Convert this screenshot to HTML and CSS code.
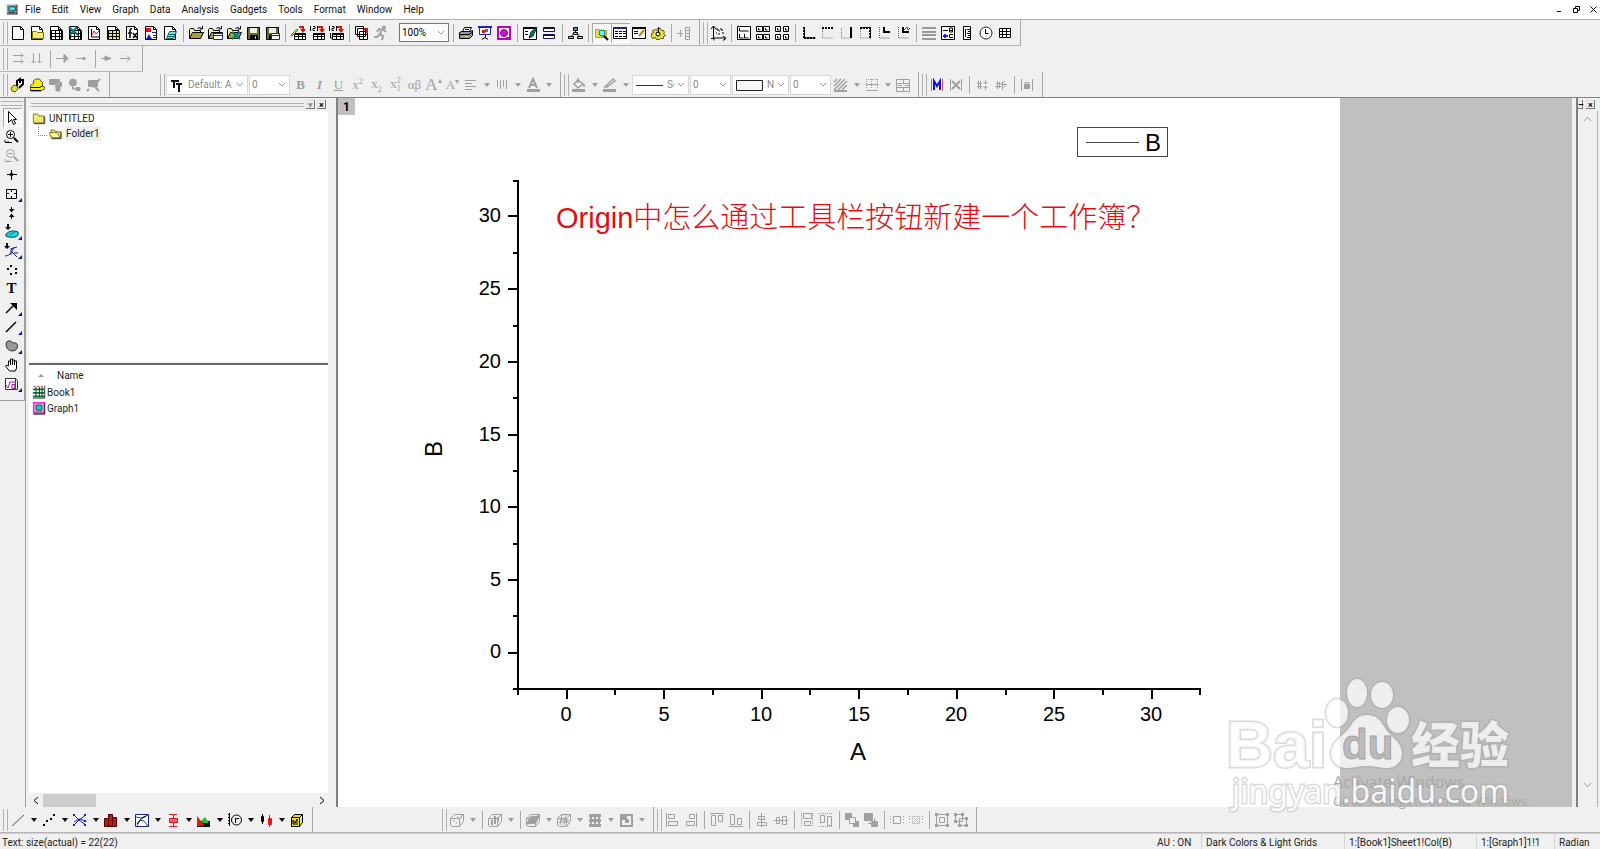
FILE: index.html
```html
<!DOCTYPE html>
<html lang="en">
<head>
  <meta charset="UTF-8">
  <title>UNTITLED - /Folder1/ - [Graph1]</title>
  <link rel="stylesheet" href="styles.css">
</head>
<body>
  <!-- shared icon parts -->
  <svg class="defs" aria-hidden="true">
    <symbol id="page" viewBox="0 0 16 16"><path fill="#fff" d="M2.5 1.5h8l3 3v10h-11z"/><path d="M10.5 1.5v3h3"/></symbol>
    <symbol id="grid" viewBox="0 0 16 16"><path d="M3.5 5.5h11v9h-11zM3.5 8.5h11M3.5 11.5h11M7.5 5.5v9M11.5 5.5v9"/></symbol>
    <symbol id="folder" viewBox="0 0 16 16"><path fill="#f4f08a" d="M1.5 13.5v-9l1-1h3l1 2h6v2"/><path fill="#a8a040" d="M1.5 13.5l3-6h11l-3 6z"/><path d="M9.5 3.5q2-2 4 0M14.5 1v3h-3"/></symbol>
    <symbol id="floppy" viewBox="0 0 16 16"><path fill="#6b6b20" d="M2.5 2.5h12v12h-12z"/><path fill="#eee" stroke="none" d="M5 3h7v5H5z"/><path fill="#000" d="M5.5 10.5h7v4h-7z"/><path stroke="#fff" d="M10.5 11.5v2"/></symbol>
    <symbol id="import" viewBox="0 0 16 16"><path fill="#fff" d="M4.5 8.5h11v6h-11zM4.5 11.5h11M8.5 8.5v6M12.5 8.5v6"/><path stroke-width="2" d="M4 9h12"/><path stroke="#e01010" stroke-width="2" d="M9 2h4v4"/><path fill="#e01010" stroke="none" d="M10 4h6l-3 4z"/></symbol>
    <symbol id="cube" viewBox="0 0 16 16"><path d="M1.5 13.5v-7l4-4h9v7l-4 5h-7zM1.5 6.5h9l4-4M10.5 6.5v8"/></symbol>
  </svg>

  <nav class="menubar">
    <svg class="app-icon" viewBox="0 0 16 16"><path fill="#9a9a9a" stroke="none" d="M1 2h13v12H1z"/><path fill="#20c8d0" stroke="#055" d="M3.5 4.5h8v5h-8z"/><path d="M1 13.5h13M13.5 2v12M3 11.5h8"/><path stroke="#fff" d="M5 8.5l3-2 2 1"/></svg>
    <a href="#">File</a><a href="#">Edit</a><a href="#">View</a><a href="#">Graph</a><a href="#">Data</a><a href="#">Analysis</a><a href="#">Gadgets</a><a href="#">Tools</a><a href="#">Format</a><a href="#">Window</a><a href="#">Help</a>
    <span class="win-buttons">
      <button title="Minimize"><svg viewBox="0 0 9 9"><path d="M2 6.5h4"/></svg></button>
      <button title="Restore"><svg viewBox="0 0 9 9"><path d="M1.5 3.5h4v4h-4zM3.5 3v-1.5h4v4H6"/></svg></button>
      <button title="Close"><svg viewBox="0 0 9 9"><path d="M1.5 1.5l6 6M7.5 1.5l-6 6"/></svg></button>
    </span>
  </nav>

  <div class="row">
    <div class="bar">
      <span class="grip"></span>
      <button title="New Project"><svg viewBox="0 0 16 16"><use href="#page"/></svg></button>
      <button title="New Folder"><svg viewBox="0 0 16 16"><use href="#page"/><path fill="#f0ec70" stroke="#77700a" d="M3.5 13.5v-7h4l1 1h6v6z"/></svg></button>
      <button title="New Workbook"><svg viewBox="0 0 16 16"><use href="#page"/><use href="#grid"/></svg></button>
      <button title="New Excel"><svg viewBox="0 0 16 16"><use href="#page"/><use href="#grid"/><path stroke="#087878" stroke-width="2" d="M2 2l9 8M10 2l-7 8"/></svg></button>
      <button title="New Graph"><svg viewBox="0 0 16 16"><use href="#page"/><path d="M5.5 4v8h8"/><path stroke="#e01010" d="M6 10l2-4 2 3 3-3"/></svg></button>
      <button title="New Matrix"><svg viewBox="0 0 16 16"><use href="#page"/><path fill="#f0e840" stroke="none" d="M3 6h12v9H3z"/><use href="#grid"/></svg></button>
      <button title="New Function"><svg viewBox="0 0 16 16"><use href="#page"/><path stroke-width="1.5" d="M8 4q-2-1-2 2v7M4 8h4M9 8l4 5M13 8l-4 5"/></svg></button>
      <button title="New Layout"><svg viewBox="0 0 16 16"><use href="#page"/><path fill="#e01010" stroke="none" d="M3 3h5v4H3z"/><path fill="#2020d0" stroke="none" d="M6 9l3 5H3z"/><path stroke="#2020d0" d="M9 7.5h4M10 10.5h3M10 12.5h3"/></svg></button>
      <button title="New Notes"><svg viewBox="0 0 16 16"><use href="#page"/><path fill="#7fdde2" stroke="#066" d="M7.5 6.5h7l-3 7h-7zM7 9.5h6M6 11.5h6"/></svg></button>
      <span class="sep"></span>
      <button title="Open"><svg viewBox="0 0 16 16"><use href="#folder"/></svg></button>
      <button title="Open Template"><svg viewBox="0 0 16 16"><use href="#folder"/><path fill="#fff" stroke="#2020a0" d="M6.5 8.5h9v6h-9zM7 10.5h8"/></svg></button>
      <button title="Open Excel"><svg viewBox="0 0 16 16"><use href="#folder"/><path stroke="#087878" stroke-width="2" d="M6 7l8 7M14 7l-8 7"/></svg></button>
      <button title="Save Project"><svg viewBox="0 0 16 16"><use href="#floppy"/></svg></button>
      <button title="Save Template"><svg viewBox="0 0 16 16"><use href="#floppy"/><path fill="#fff" stroke="#2020a0" d="M7.5 8.5h8v6h-8zM8 10.5h7"/></svg></button>
      <span class="sep"></span>
      <button title="Import Wizard"><svg viewBox="0 0 16 16"><use href="#import"/><path fill="#f0e040" stroke="#77700a" d="M1 10l6-6 1 1-6 6z"/></svg></button>
      <button title="Import Single ASCII"><svg viewBox="0 0 16 16"><use href="#import"/><path d="M1.5 1v5M4 1.5h2v2H4v2h2M8.5 1v5"/></svg></button>
      <button title="Import Multiple ASCII"><svg viewBox="0 0 16 16"><use href="#import"/><path d="M1.5 1v5M4 1.5h2v2H4v2h2M8.5 1v5M2.5 8v5h2"/></svg></button>
      <span class="sep"></span>
      <button title="Batch Processing"><svg viewBox="0 0 16 16"><path fill="#fff" d="M1.5 1.5h8v8h-8zM3.5 3.5h8v8h-8zM5.5 6.5h8v8h-8zM5.5 9.5h8M9.5 7v7"/><path stroke="#e01010" stroke-width="2" d="M10 4h3v4"/></svg></button>
      <button title="Recalculate" disabled><svg viewBox="0 0 16 16"><path stroke-width="2" d="M9 4L7 9l3 2-1 4M7 9l-3 3H1M4 7l2-3 5 1 2 2"/><circle cx="11" cy="2.5" r="1.5" fill="currentColor"/></svg></button>
      <select class="zoom" aria-label="Zoom"><option>100%</option></select>
      <span class="sep"></span>
      <button title="Print"><svg viewBox="0 0 16 16"><path fill="#fff" d="M4.5 6.5l2-4h7l-2 4"/><path fill="#999" d="M1.5 7.5l2-1h9l2-1v5l-3 3h-10z"/><path d="M2 9.5h9l3-2M7 4.5h4"/><path stroke="#e8e030" d="M7 11.5h3"/></svg></button>
      <button title="Slide Show"><svg viewBox="0 0 16 16"><path fill="#fff" stroke="#2020c0" d="M2.5 2.5h11v7h-11z"/><path stroke="#2020c0" stroke-width="2" d="M1 2h14"/><path d="M8.5 10v3M5 14.5l3-2 3 2"/><path fill="#e01010" stroke="none" d="M5 5h3v3H5z"/><path fill="#10a040" stroke="none" d="M8 4h3v3H8z"/></svg></button>
      <button title="Video"><svg viewBox="0 0 16 16"><path fill="#fff" stroke="#c000c0" stroke-width="2" d="M2 2h12v12H2z"/><circle cx="8" cy="8" r="3.5" fill="#d010d0" stroke="#800080"/><path stroke="#c000c0" d="M10 12.5h3"/></svg></button>
      <span class="sep"></span>
      <button title="Edit Mode"><svg viewBox="0 0 16 16"><path fill="#fff" d="M1.5 2.5h13v12h-13z"/><path stroke-width="2" d="M1 3h14"/><path fill="#087878" stroke="#033" d="M15 2l-6 5-2 6 4-2z"/><path d="M3 6.5h3M3 9.5h3"/></svg></button>
      <button title="Duplicate"><svg viewBox="0 0 16 16"><path fill="#fff" stroke="#101050" d="M2.5 2.5h11v4h-11zM2.5 9.5h11v4h-11z"/><path stroke="#101050" d="M2 3.5h12M2 10.5h12"/></svg></button>
      <span class="sep"></span>
      <button title="Project Tree"><svg viewBox="0 0 16 16"><path d="M8.5 5v3M4.5 11l4-4 4 4"/><path fill="#20a8b0" d="M6.5 2.5h4v3h-4z"/><path fill="#e8e040" d="M6.5 7.5h4v2h-4zM1.5 11.5h5v2h-5zM10.5 11.5h5v2h-5z"/></svg></button>
      <span class="sep"></span>
      <button class="on" title="Project Explorer"><svg viewBox="0 0 16 16"><path fill="#e8e040" stroke="#b0a61e" d="M2.5 12.5v-8h4l1 1h6v7z"/><circle cx="9" cy="8" r="3" fill="#7fe8f0" stroke="#077"/><path stroke-width="2" d="M11 11l4 4"/></svg></button>
      <button class="on" title="Results Log"><svg viewBox="0 0 16 16"><path fill="#fff" d="M1.5 2.5h13v11h-13z"/><path stroke="#202080" stroke-width="2" d="M1 3h14"/><path stroke-dasharray="3 1" d="M3 6.5h11M3 8.5h11M3 11.5h11"/></svg></button>
      <button title="Script Window"><svg viewBox="0 0 16 16"><path fill="#fff" d="M1.5 2.5h13v11h-13z"/><path stroke-width="2" d="M1 3h14"/><path d="M3 6.5h4M3 8.5h4"/><path stroke="#99901a" stroke-width="2" d="M13 5l-5 6"/></svg></button>
      <button title="Code Builder"><svg viewBox="0 0 16 16"><path fill="#e8e040" stroke="#5a5510" d="M1.5 8.5l2-1-1-2 3-1 1 1 1-2h3l1 2 2 0 1 2-1 1 2 2-2 1 0 2-3 0-1 1h-3l-1-2-3 1-1-2z"/><circle cx="8" cy="9" r="2" fill="#fff"/><path d="M8.5 2v6"/></svg></button>
      <span class="sep"></span>
      <button title="Add Column" disabled><svg viewBox="0 0 16 16"><path d="M1 8.5h6M4.5 5v7M9.5 2.5h4v12h-4zM10 5.5h4M10 8.5h4M10 11.5h4"/></svg></button>
    </div>
    <div class="bar">
      <span class="grip"></span>
      <button title="Rescale"><svg viewBox="0 0 16 16"><path d="M3.5 1v12h12M1 4l2.5-3 2.5 3M13 11l3 2.5-3 2M1 13.5h3v2M6 4h2v2M8 9h2M10 4h2v2M6 8h1M12 8h2M9 6h1"/></svg></button>
      <span class="sep"></span>
      <button title="Extract Layers"><svg viewBox="0 0 16 16"><path fill="#fff" d="M1.5 1.5h13v13h-13z"/><path d="M3.5 3v3h9M3.5 9v4h4M8.5 9v4h4"/></svg></button>
      <button title="Merge"><svg viewBox="0 0 16 16"><path fill="#fff" d="M1.5 1.5h6v5h-6zM8.5 1.5h6v5h-6zM1.5 9.5h6v5h-6zM8.5 9.5h6v5h-6z"/><path d="M3.5 3v2h2M10.5 3v2h2M3.5 11v2h2M10.5 11v2h2"/></svg></button>
      <button title="Arrange Layers"><svg viewBox="0 0 16 16"><path fill="#fff" d="M1.5 1.5h5v5h-5zM9.5 1.5h5v5h-5zM1.5 9.5h5v5h-5zM9.5 9.5h5v5h-5z"/><path d="M3.5 3v2h2M11.5 3v2h2M3.5 11v2h2M11.5 11v2h2"/></svg></button>
      <span class="sep"></span>
      <button title="Bottom X Left Y"><svg viewBox="0 0 16 16"><path d="M4.5 2v11h11"/><path stroke-width="2" stroke-dasharray="2 1" d="M4 2v11M4 13h11"/></svg></button>
      <button title="Top X"><svg viewBox="0 0 16 16"><path stroke-width="2" stroke-dasharray="2 1" d="M3 3h11"/><path stroke-dasharray="1 1" stroke="#777" d="M3.5 4v9h11"/></svg></button>
      <button title="Right Y"><svg viewBox="0 0 16 16"><path stroke-dasharray="1 1" stroke="#777" d="M3.5 3v10h9"/><path stroke-width="2" d="M13 2v11"/></svg></button>
      <button title="Top X Right Y"><svg viewBox="0 0 16 16"><path d="M3 2.5h10.5v11"/><path stroke-width="2" stroke-dasharray="2 1" d="M3 3h10v10"/><path stroke-dasharray="1 1" stroke="#777" d="M3.5 4v9h10"/></svg></button>
      <button title="Inset Graph"><svg viewBox="0 0 16 16"><path stroke-dasharray="1 1" stroke="#555" d="M3.5 2v11h11"/><path stroke-width="2" d="M8 2v5h6"/></svg></button>
      <button title="Inset Graph With Data"><svg viewBox="0 0 16 16"><path stroke-dasharray="1 1" stroke="#555" d="M3.5 2v11h11"/><path stroke-width="2" d="M8 2v5h6"/><path stroke="#c01010" d="M9 5l3-3 1 3 2-2"/></svg></button>
      <span class="sep"></span>
      <button title="Color Scale"><svg viewBox="0 0 16 16"><path stroke="#999" stroke-width="2" d="M1 3h14M1 7h14M1 10h14M1 14h14"/></svg></button>
      <button title="New Legend"><svg viewBox="0 0 16 16"><path fill="#fff" d="M1.5 1.5h13v13h-13z"/><path d="M3 5.5h5M9.5 3v4h3V3zM10 5.5h2M13 9.5H9.5v3H13"/><path stroke="#2020e0" stroke-width="2" d="M3 11h5M5 9v4"/></svg></button>
      <button title="Scale"><svg viewBox="0 0 16 16"><path fill="#fff" d="M4.5 1.5h7v13h-7z"/><path d="M8 4.5h3M9 6.5h2M8 8.5h3M9 10.5h2M8 12.5h3M6.5 4v8"/></svg></button>
      <button title="Date and Time"><svg viewBox="0 0 16 16"><circle cx="8" cy="8" r="6" fill="#fff" stroke="#222"/><path d="M7.5 4v4.5h3"/></svg></button>
      <button title="New Table"><svg viewBox="0 0 16 16"><path fill="#fff" d="M2.5 3.5h11v9h-11zM2.5 6.5h11M2.5 9.5h11M5.5 4v9M9.5 4v9"/></svg></button>
    </div>
  </div>

  <div class="row">
    <div class="bar">
      <span class="grip"></span>
      <button title="Row Order" disabled><svg viewBox="0 0 16 16"><path d="M3 4.5h10M11 2.5l2 2-2 2M3 10.5h10M11 8.5l2 2-2 2"/></svg></button>
      <button title="Column Order" disabled><svg viewBox="0 0 16 16"><path d="M4.5 2v10M2.5 10l2 2 2-2M10.5 2v10M8.5 10l2 2 2-2"/></svg></button>
      <span class="sep"></span>
      <button title="Last Step" disabled><svg viewBox="0 0 16 16"><path d="M1 7.5h9"/><path fill="currentColor" d="M9 3l4 4.5-4 4z"/></svg></button>
      <button title="Step" disabled><svg viewBox="0 0 16 16"><path d="M2 7.5h9"/><path fill="currentColor" d="M9 6l3 1.5-3 1.5z"/></svg></button>
      <span class="sep"></span>
      <button title="Run" disabled><svg viewBox="0 0 16 16"><path d="M1 7.5h10"/><path fill="currentColor" d="M5 5l6 2.5-6 2z"/></svg></button>
      <button title="Next" disabled><svg viewBox="0 0 16 16"><path d="M1 7.5h10M8 4.5l3 3-3 3"/></svg></button>
    </div>
  </div>

  <div class="row last">
    <div class="bar">
      <span class="grip"></span>
      <button title="Pick Format"><svg viewBox="0 0 16 16"><path fill="#e8e030" stroke="#5a5510" d="M4 8l3 1 1 3-3 3-3-1-1-3z"/><path stroke-width="2" d="M7 9V4l3-2v4M11 3l2 0v4l-4 4"/></svg></button>
      <button title="Style Holder"><svg viewBox="0 0 16 16"><path fill="#f4ee20" stroke="#5a5510" d="M1.5 8.5l3-2V4l2-2h4l3 4v3l2 1v2l-4 2h-10z"/><path d="M2 10.5h9l3-2M2 13.5h10"/></svg></button>
      <button title="Apply Format" disabled><svg viewBox="0 0 16 16"><path fill="currentColor" d="M1.5 2.5h10v5h-10zM6.5 9.5h7v-4h-2M8 10h4v4H8z"/></svg></button>
      <button title="Copy Format" disabled><svg viewBox="0 0 16 16"><circle cx="6" cy="5.5" r="3.5" fill="currentColor"/><path fill="currentColor" d="M5.5 9v3h3M9 10.5h4v3H9z"/></svg></button>
      <button title="Clear Format" disabled><svg viewBox="0 0 16 16"><path fill="currentColor" d="M2.5 3.5h9v6h-9z"/><path stroke-width="2" d="M14 2L6 10M7 8l6 6M3 12l-2 2"/></svg></button>
    </div>
    <div class="bar format">
      <span class="grip"></span>
      <label class="combo font-name"><svg viewBox="0 0 16 16"><path stroke="#111" stroke-width="2" d="M3 4h8M6 4v7M8 7h6M11 7v8"/></svg><select aria-label="Font"><option>Default: A</option></select></label>
      <label class="combo size"><select aria-label="Font size"><option>0</option></select></label>
      <button class="txt b" title="Bold" disabled>B</button>
      <button class="txt it" title="Italic" disabled>I</button>
      <button class="txt u" title="Underline" disabled>U</button>
      <button class="txt" title="Superscript" disabled>x<sup>2</sup></button>
      <button class="txt" title="Subscript" disabled>x<sub>2</sub></button>
      <button class="txt" title="Supersubscript" disabled>x<span class="both"><sup>2</sup><sub>1</sub></span></button>
      <button class="txt" title="Greek" disabled>αβ</button>
      <button class="txt big" title="Increase Font" disabled>A<sup>▴</sup></button>
      <button class="txt" title="Decrease Font" disabled>A<sup>▾</sup></button>
      <button title="Alignment" disabled><svg viewBox="0 0 16 16"><path d="M2 3.5h11M2 6.5h7M2 9.5h11M2 12.5h7"/></svg></button><button class="arr" title="Alignment options" disabled></button>
      <button title="Vertical" disabled><svg viewBox="0 0 16 16"><path d="M3.5 3v7M6.5 3v9M9.5 3v7M12.5 3v9"/></svg></button><button class="arr" title="Vertical options" disabled></button>
      <button title="Font Color" disabled><svg viewBox="0 0 16 16"><path stroke-width="2" d="M4 11l4-9 4 9M6 8h4"/><path stroke-width="3" d="M2 13.5h13"/></svg></button><button class="arr" title="Font colors" disabled></button>
    </div>
    <div class="bar">
      <span class="grip"></span>
      <button title="Fill Color" disabled><svg viewBox="0 0 16 16"><path stroke-width="1.5" d="M3 7l4-4 5 4-5 4zM7 1v5M13 7v3"/><path stroke-width="3" d="M1 13.5h13"/></svg></button><button class="arr" title="Fill colors" disabled></button>
      <button title="Line Color" disabled><svg viewBox="0 0 16 16"><path stroke-width="1.5" d="M3 10l8-8 2 2-8 6H3z"/><path stroke-width="3" d="M1 13.5h13"/></svg></button><button class="arr" title="Line colors" disabled></button>
      <label class="combo style"><svg viewBox="0 0 28 16"><path stroke="#333" d="M1 8.5h27"/></svg><select aria-label="Line style"><option>Solid</option></select></label>
      <label class="combo size"><select aria-label="Line width"><option>0</option></select></label>
      <label class="combo style"><svg viewBox="0 0 28 16"><path stroke="#222" fill="#f6f6f6" d="M1.5 3.5h26v10h-26z"/></svg><select aria-label="Fill pattern"><option>None</option></select></label>
      <label class="combo size"><select aria-label="Pattern width"><option>0</option></select></label>
      <button title="Pattern" disabled><svg viewBox="0 0 16 16"><path stroke-width="1.5" d="M1 5l3-3M1 9l7-7M1 13l11-11M5 13l9-9M9 13l5-5"/><path stroke-width="2" d="M1 14h13"/></svg></button><button class="arr" title="Patterns" disabled></button>
      <button title="Borders" disabled><svg viewBox="0 0 16 16"><path stroke-dasharray="1 1" d="M2.5 2v10M7.5 2v10M13.5 2v10M2 2.5h12"/><path d="M2 7.5h12M2 13.5h12"/></svg></button><button class="arr" title="Border options" disabled></button>
      <button title="Merge Cells" disabled><svg viewBox="0 0 16 16"><path d="M1.5 2.5h13v12h-13zM1.5 6.5h13M1.5 10.5h13M8.5 2v5M8.5 10v5M3 8.5h4M10 8.5h4"/></svg></button>
    </div>
    <div class="bar">
      <span class="grip"></span>
      <button title="Mask Points"><svg viewBox="0 0 16 16"><path stroke="#e05050" d="M2.5 2v12M13.5 2v12"/><path stroke="#1010e0" stroke-width="2" d="M5 13V4l3 5 3-5v9"/></svg></button>
      <button title="Unmask" disabled><svg viewBox="0 0 16 16"><path d="M2.5 2v12M13.5 2v12"/><path stroke-width="2" d="M4 4l8 8M12 4l-8 8"/></svg></button>
      <span class="sep"></span>
      <button title="Swap Mask" disabled><svg viewBox="0 0 16 16"><path d="M3 6.5h5M3 9.5h5M4.5 4v8M6.5 4v8M11.5 3v4M9.5 5l2 2 2-2M11.5 13V9M9.5 11l2-2 2 2"/></svg></button>
      <button title="Hide Mask" disabled><svg viewBox="0 0 16 16"><path d="M3 6.5h5M2 9.5h6M4.5 4v8M6.5 5v6M8 7.5h6M9.5 5v8M12 4l-3 3M11 10.5l2-2"/></svg></button>
      <span class="sep"></span>
      <button title="Lock Mask" disabled><svg viewBox="0 0 16 16"><path d="M2.5 2v12M13.5 2v12M6 8V5.5h4V8"/><path fill="currentColor" d="M5.5 7.5h5v4h-5z"/></svg></button>
    </div>
  </div>

  <main class="main">
    <aside class="palette">
      <span class="grip flat"></span>
      <button class="on" title="Pointer"><svg viewBox="0 0 16 16"><path fill="#fff" d="M4.5 1.5v11l3-3 2 5 2-1-2-4h3z"/></svg></button>
      <button title="Zoom In"><svg viewBox="0 0 16 16"><circle cx="6.5" cy="5.5" r="4" fill="#fff"/><path d="M4 5.5h5M6.5 3v5M1 13.5h7M1 11v2M4 12v2"/><path stroke-width="2" d="M10 9l4 4"/></svg></button>
      <button title="Zoom Out" disabled><svg viewBox="0 0 16 16"><circle cx="6.5" cy="5.5" r="4"/><path d="M4 5.5h5M1 13.5h7M1 11v2M4 12v2"/><path stroke-width="2" d="M10 9l4 4"/></svg></button>
      <button title="Screen Reader"><svg viewBox="0 0 16 16"><path d="M3 7.5h10M7.5 3v10"/><circle cx="7.5" cy="7.5" r="1.5"/></svg></button>
      <button class="more" title="Data Selector"><svg viewBox="0 0 16 16"><path d="M2.5 3.5h10v9h-10zM7.5 3v3M7.5 10v3M2 7.5h3M10 7.5h3"/></svg></button>
      <button title="Data Reader"><svg viewBox="0 0 16 16"><path d="M7.5 2v4M7.5 10v4"/><path fill="currentColor" stroke="none" d="M5 4h5.5L7.5 7.5zM5 12h5.5L7.5 8.5z"/></svg></button>
      <button class="more" title="Mask"><svg viewBox="0 0 16 16"><path fill="currentColor" stroke="none" d="M1 3h6L4 6zM3 0h2v4H3z"/><path fill="#20d8e8" stroke="#044" d="M2 10q5-5 12-2 1 4-3 5-6 1-9-1z"/><path stroke="#08a" d="M5 11l6-3"/></svg></button>
      <button class="more" title="Draw Data"><svg viewBox="0 0 16 16"><path fill="currentColor" stroke="none" d="M0 3h6L3 6zM2 0h2v4H2z"/><path stroke="#202080" d="M1 13q6 0 9-9M7 5v7M7 6l6-2M8 9l5 5M10 10h4"/></svg></button>
      <button title="Draw Points"><svg viewBox="0 0 16 16"><path stroke-width="2" d="M6 4h2M3 7h2M11 7h2M11 11h2M6 12h2"/></svg></button>
      <button class="txt t" title="Text Tool">T</button>
      <button class="more" title="Arrow"><svg viewBox="0 0 16 16"><path stroke-width="1.5" d="M2 13l9-9"/><path fill="currentColor" stroke="none" d="M6 3h7v7z"/></svg></button>
      <button class="more" title="Line"><svg viewBox="0 0 16 16"><path stroke-width="1.5" d="M2 13L12 3"/></svg></button>
      <button class="more" title="Region"><svg viewBox="0 0 16 16"><path fill="#999" stroke="#333" d="M2.5 4q4-3 6 1 5-1 5 3 0 5-6 5-7-2-5-9z"/></svg></button>
      <button title="Pan"><svg viewBox="0 0 16 16"><path fill="#fff" d="M5.5 14l-4-5 1-1 2 1V4h2V2h2v1h2v1h2v7l-1 3z"/><path d="M6.5 3v5M8.5 3v5M10.5 4v4"/></svg></button>
      <button class="more" title="Insert Equation"><svg viewBox="0 0 16 16"><path fill="#fff" stroke="#333" d="M1.5 2.5h10v11h-10zM11.5 2.5l2 2v9h-2"/><path stroke="#a020a0" d="M2 9l2 3 2-6h6M8 8.5h3v4H8zM11 9v4"/></svg></button>
    </aside>

    <aside class="explorer">
      <div class="pane-title"><span class="rails"></span><button class="faint" title="Menu">▾</button><button title="Close">×</button></div>
      <ul class="tree">
        <li><svg viewBox="0 0 16 16"><path fill="#ecea70" stroke="#77700a" d="M1.5 13.5v-10h5l1 2h6v8z"/><path d="M2 14.5h12.5V6"/></svg><span>UNTITLED</span>
          <ul>
            <li><svg viewBox="0 0 16 16"><path fill="#ecea70" stroke="#77700a" d="M3.5 13.5v-9h4l1 2h6v7z"/><path fill="#f8f6a0" stroke="#77700a" d="M1.5 7.5h9l3 6h-9z"/><path d="M4 14.5h11V7"/></svg><span class="sel">Folder1</span></li>
          </ul>
        </li>
      </ul>
      <table class="files">
        <thead><tr><th><span class="sort"></span>Name</th></tr></thead>
        <tbody>
          <tr><td><svg viewBox="0 0 16 16"><path fill="#e8fff0" stroke="none" d="M1 1h13v13H1z"/><path stroke="#0a7a3a" stroke-width="2" d="M1 5h13M1 9h13M1 13h13"/><path d="M4.5 2v12M8.5 2v12M11.5 2v12"/><path stroke="#e01010" d="M2 1.5h2M6 1.5h2M10 1.5h2"/><path d="M14.5 1v14H1"/></svg>Book1</td></tr>
          <tr><td><svg viewBox="0 0 16 16"><path fill="#fff" stroke="#e030e0" stroke-width="2" d="M2 2h12v12H2z"/><path fill="#20c8d0" d="M4.5 4.5h7v6h-7z"/><path d="M3 12.5h10M14.5 2v13H2"/></svg>Graph1</td></tr>
        </tbody>
      </table>
      <div class="hscroll"><button title="Scroll left"><svg viewBox="0 0 9 9"><path d="M6 1L2 4.5 6 8"/></svg></button><span class="thumb"></span><button title="Scroll right"><svg viewBox="0 0 9 9"><path d="M3 1l4 3.5L3 8"/></svg></button></div>
    </aside>

    <section class="workspace">
      <div class="graph-page">
        <button class="layer">1</button>
        <svg class="chart" viewBox="0 0 1002 709" preserveAspectRatio="xMinYMin meet">
          <rect class="legend-box" x="739.5" y="29.5" width="90" height="29"/>
          <path class="legend-line" d="M748 44.5h53"/>
          <text class="axis-title" x="807" y="53">B</text>
          <path class="axis" d="M180 82v510M175 591h688"/>
          <path class="ticks" d="M170 118h9M170 191h9M170 264h9M170 337h9M170 409h9M170 482h9M170 555h9
            M175 83h5M175 155h5M175 228h5M175 300h5M175 373h5M175 446h5M175 518h5
            M229 591v10M326 591v10M424 591v10M521 591v10M619 591v10M716 591v10M814 591v10
            M180 591v6M277 591v6M375 591v6M472 591v6M570 591v6M668 591v6M765 591v6M862 591v6"/>
          <g class="ylabels">
            <text x="163" y="124">30</text><text x="163" y="197">25</text><text x="163" y="270">20</text><text x="163" y="343">15</text><text x="163" y="415">10</text><text x="163" y="488">5</text><text x="163" y="560">0</text>
          </g>
          <g class="xlabels">
            <text x="228" y="623">0</text><text x="326" y="623">5</text><text x="423" y="623">10</text><text x="521" y="623">15</text><text x="618" y="623">20</text><text x="716" y="623">25</text><text x="813" y="623">30</text>
          </g>
          <text class="axis-title" x="512" y="662">A</text>
          <text class="axis-title" transform="translate(104 359) rotate(-90)">B</text>
          <text class="note" x="218" y="130">Origin<tspan class="cjk">中怎么通过工具栏按钮新建一个工作簿？</tspan></text>
        </svg>
      </div>
      <div class="backdrop"></div>
    </section>

    <aside class="dock">
      <div class="dock-title"><button title="Pin">–</button><button title="Close">×</button></div>
      <div class="vscroll"><button title="Scroll up" disabled><svg viewBox="0 0 9 9"><path d="M1 6l3.5-4L8 6"/></svg></button><button title="Scroll down" disabled><svg viewBox="0 0 9 9"><path d="M1 3l3.5 4L8 3"/></svg></button></div>
    </aside>
  </main>

  <div class="row bottom">
    <div class="bar">
      <span class="grip"></span>
      <button title="Line"><svg viewBox="0 0 16 16"><path stroke="#555" d="M2 14L14 3"/></svg></button><button class="arr" title="Line plots"></button>
      <button title="Scatter"><svg viewBox="0 0 16 16"><path stroke-width="2" d="M2 13h2M5 9h2M9 7h2M12 3h2"/></svg></button><button class="arr" title="Scatter plots"></button>
      <button title="Line + Symbol"><svg viewBox="0 0 16 16"><path stroke="#2020d0" d="M2 3l5 5 7-5M2 13l5-5 7 5M2 10l5-3 7 2"/><path stroke="#2020a0" stroke-width="2" d="M1 3h2M6 8h2M12 3h2M1 13h2M12 13h2M12 9h2"/></svg></button><button class="arr" title="Line and symbol plots"></button>
      <button title="Column"><svg viewBox="0 0 16 16"><path fill="#c01818" stroke="#500" d="M1.5 6.5h4v8h-4zM5.5 2.5h4v12h-4zM9.5 5.5h4v9h-4z"/></svg></button><button class="arr" title="Column plots"></button>
      <button title="Multi-Panel"><svg viewBox="0 0 16 16"><path fill="#fff" stroke="#202080" d="M1.5 2.5h13v12h-13z"/><path stroke="#2040d0" d="M2 5l5 1 7-3M3 14l3-6 4 1 4 5"/><path d="M3 12l4-5 5-3"/></svg></button><button class="arr" title="Multi-panel plots"></button>
      <button title="Box"><svg viewBox="0 0 16 16"><path stroke="#d02020" d="M4 2.5h8M8.5 2v12M4 14.5h8"/><path fill="#f06060" stroke="#d02020" d="M4.5 6.5h8v4h-8z"/></svg></button><button class="arr" title="Box plots"></button>
      <button title="Area"><svg viewBox="0 0 16 16"><path fill="#111" stroke="none" d="M1 15V9h13V7v8z"/><path fill="#e01818" stroke="none" d="M1 14V4l7 9v1z"/><path fill="#20c030" stroke="none" d="M5 9l4-4 4 6H7z"/></svg></button><button class="arr" title="Area plots"></button>
      <button title="Specialized"><svg viewBox="0 0 16 16"><circle cx="9.5" cy="8" r="5"/><path d="M2.5 1v13M1 2.5h2M1 5.5h2M1 8.5h2M1 11.5h2M8.5 11V6M8 7.5l2-1h2"/></svg></button><button class="arr" title="Specialized plots"></button>
      <button title="Stock"><svg viewBox="0 0 16 16"><path fill="#fff" d="M4.5 2v10M3.5 4.5h2v5h-2z"/><path fill="#e01818" stroke="#e01818" d="M11.5 3v12M10.5 6.5h3v6h-3z"/></svg></button><button class="arr" title="Stock plots"></button>
      <button title="Template Library"><svg viewBox="0 0 16 16"><path fill="#f0d830" d="M2.5 5.5h8v9h-8zM2.5 5.5l3-3h8l-3 3M13.5 2.5v8l-3 4"/><path d="M4 12v-4l2 3 2-4v4M4 12h5"/></svg></button>
    </div>
    <div class="bar second">
      <span class="grip"></span>
      <button title="3D Scatter" disabled><svg viewBox="0 0 16 16"><use href="#cube"/><path d="M4 9h2M8 5h2M7 11h1M12 6h1"/></svg></button><button class="arr" title="3D scatter plots" disabled></button><span class="sep"></span>
      <button title="3D Bars" disabled><svg viewBox="0 0 16 16"><use href="#cube"/><path stroke-width="2" d="M5 13V8M8 12V4M11 10V5"/></svg></button><button class="arr" title="3D bar plots" disabled></button><span class="sep"></span>
      <button title="3D Surface" disabled><svg viewBox="0 0 16 16"><use href="#cube"/><path fill="currentColor" d="M2 12l3-7 9-1-3 7z"/></svg></button><button class="arr" title="3D surface plots" disabled></button>
      <button title="3D Wire" disabled><svg viewBox="0 0 16 16"><use href="#cube"/><path d="M3 10h10M4 8h9M6 3l-2 10M10 3l-2 10"/></svg></button><button class="arr" title="3D wire plots" disabled></button>
      <button title="Heatmap" disabled><svg viewBox="0 0 16 16"><path stroke-width="3" d="M2 3.5h12M2 8.5h12M2 13.5h12"/><path stroke-width="2" d="M4 2v13M8 2v13M12 2v13"/></svg></button><button class="arr" title="Heatmap plots" disabled></button>
      <button title="Image" disabled><svg viewBox="0 0 16 16"><path stroke-width="2" d="M3 3h11v11H3z"/><path fill="currentColor" d="M3.5 3.5h5v4h-5zM7.5 7.5h3v3h-3z"/></svg></button><button class="arr" title="Image plots" disabled></button>
    </div>
    <div class="bar">
      <span class="grip"></span>
      <button title="Align Left" disabled><svg viewBox="0 0 16 16"><path d="M2.5 1v14M4.5 2.5h6v4h-6zM4.5 9.5h9v4h-9z"/></svg></button>
      <button title="Align Right" disabled><svg viewBox="0 0 16 16"><path d="M13.5 1v14M6.5 2.5h5v4h-5zM3.5 9.5h8v4h-8z"/></svg></button>
      <span class="sep"></span>
      <button title="Align Top" disabled><svg viewBox="0 0 16 16"><path d="M1 1.5h14M2.5 3.5h4v10h-4zM9.5 3.5h4v6h-4z"/></svg></button>
      <button title="Align Bottom" disabled><svg viewBox="0 0 16 16"><path d="M1 14.5h14M2.5 2.5h4v10h-4zM9.5 6.5h4v6h-4z"/></svg></button>
      <span class="sep"></span>
      <button title="Align Vertical" disabled><svg viewBox="0 0 16 16"><path d="M7.5 1v14M4.5 4.5h6v3h-6zM3.5 10.5h9v3h-9z"/></svg></button>
      <button title="Align Horizontal" disabled><svg viewBox="0 0 16 16"><path d="M1 8.5h14M3.5 5.5h3v6h-3zM9.5 4.5h4v8h-4z"/></svg></button>
      <span class="sep"></span>
      <button title="Uniform Width" disabled><svg viewBox="0 0 16 16"><path d="M4.5 1.5h8v5h-8zM5.5 9.5h6v4h-6z"/><path stroke-dasharray="1 1" d="M2.5 1v14M13.5 1v14"/></svg></button>
      <button title="Uniform Height" disabled><svg viewBox="0 0 16 16"><path d="M2.5 3.5h4v7h-4zM9.5 4.5h4v9h-4z"/><path stroke-dasharray="1 1" d="M1 1.5h14M1 14.5h14"/></svg></button>
      <span class="sep"></span>
      <button title="Front" disabled><svg viewBox="0 0 16 16"><path fill="currentColor" d="M1.5 1.5h6v6h-6zM9.5 9.5h5v5h-5z"/><path fill="#f0f0f0" d="M5.5 5.5h6v6h-6z"/></svg></button>
      <button title="Back" disabled><svg viewBox="0 0 16 16"><path fill="currentColor" d="M1.5 1.5h8v7h-8zM8.5 9.5h6v5h-6z"/><path d="M5 11.5h3M11.5 6v3"/></svg></button>
      <span class="sep"></span>
      <button title="Front Data" disabled><svg viewBox="0 0 16 16"><path d="M4.5 4.5h7v7h-7z"/><path stroke-dasharray="1 2" d="M1.5 4v8M14.5 4v8"/></svg></button>
      <button title="Back Data" disabled><svg viewBox="0 0 16 16"><path stroke-dasharray="1 1" d="M4.5 4.5h7v7h-7zM6 6l5 5M11 6l-5 5"/><path stroke-dasharray="1 2" d="M1.5 4v8M14.5 4v8"/></svg></button>
      <span class="sep"></span>
      <button title="Group" disabled><svg viewBox="0 0 16 16"><path d="M2.5 2.5h11v11h-11zM5.5 5.5h5v5h-5z"/><path fill="currentColor" stroke="none" d="M1 1h3v3H1zM12 1h3v3h-3zM1 12h3v3H1zM12 12h3v3h-3z"/></svg></button>
      <button title="Ungroup" disabled><svg viewBox="0 0 16 16"><path d="M2.5 2.5h7v7h-7zM6.5 6.5h7v7h-7z"/><path fill="currentColor" stroke="none" d="M1 1h3v3H1zM8 1h3v3H8zM1 8h3v3H1zM12 5h3v3h-3zM5 12h3v3H5zM12 12h3v3h-3z"/></svg></button>
    </div>
  </div>

  <footer class="status">
    <span class="hint">Text: size(actual) = 22(22)</span>
    <span class="au">AU : ON</span>
    <span class="theme">Dark Colors &amp; Light Grids</span>
    <span class="dataset">1:[Book1]Sheet1!Col(B)</span>
    <span class="window">1:[Graph1]1!1</span>
    <span class="angle">Radian</span>
  </footer>

  <svg class="watermark" viewBox="1220 670 316 153">
    <g class="activate">
      <text class="a1" x="1333" y="788">Activate Windows</text>
      <text class="a2" x="1333" y="806">Go to Settings to activate Windows.</text>
    </g>
    <g class="mark">
      <text class="bai" x="1226" y="767">Bai</text>
      <ellipse cx="1337" cy="713" rx="11" ry="14"/>
      <ellipse cx="1357" cy="693" rx="10" ry="14"/>
      <ellipse cx="1382" cy="695" rx="11" ry="13"/>
      <ellipse cx="1398" cy="720" rx="11" ry="13"/>
      <path d="M1367 715c10 0 14 6 18 13 5 8 17 14 17 25 0 9-6 15-15 15-7 0-12-2-20-2s-13 2-20 2c-10 0-16-6-16-15 0-11 12-17 18-25 5-7 8-13 18-13z"/>
      <text class="jy" x="1411" y="763">经验</text>
      <text class="url" x="1232" y="803">jingyan.baidu.com</text>
    </g>
    <text class="du" x="1342" y="759">du</text>
  </svg>
</body>
</html>
```
FILE: styles.css
```css
* {
  box-sizing: border-box;
}
body {
  margin: 0;
  height: 100vh;
  display: flex;
  flex-direction: column;
  position: relative;
  overflow: hidden;
  background: #f0f0f0;
  color: #222;
  font-family: Roboto, "Noto Sans", sans-serif;
  font-size: 10px;
}
.defs {
  position: absolute;
  width: 0;
  height: 0;
}
svg {
  display: block;
  fill: none;
  stroke: currentColor;
}
button {
  padding: 0;
  border: 0;
  background: none;
  color: #000;
  font: inherit;
}
button:disabled {
  color: #a0a0a0;
}

/* menu */
.menubar {
  display: flex;
  align-items: center;
  gap: 11px;
  height: 20px;
  flex: none;
  padding: 0 2px 0 6px;
  background: #fff;
  border-bottom: 1px solid #b0b0b0;
}
.menubar a {
  color: #111;
  text-decoration: none;
}
.app-icon {
  width: 13px;
  height: 13px;
  margin-right: -5px;
}
.win-buttons {
  display: flex;
  gap: 8px;
  margin-left: auto;
}
.win-buttons svg {
  width: 9px;
  height: 9px;
}

/* toolbars */
.row {
  display: flex;
  flex: none;
  height: 26px;
}
.row.last {
  border-bottom: 1px solid #808080;
}
.bar {
  display: flex;
  align-items: center;
  padding-right: 5px;
  border-right: 1px solid #a8a8a8;
  border-bottom: 1px solid #b4b4b4;
}
.last .bar {
  border-bottom: 0;
}
.bar.format {
  margin-left: 47px;
}
.bar.second {
  margin-left: 126px;
}
.bottom {
  border-bottom: 1px solid #b4b4b4;
}
.bottom .bar {
  border-bottom: 0;
}
.grip {
  width: 5px;
  height: 22px;
  margin: 0 1px 0 3px;
  border: 1px solid #b0b0b0;
  border-width: 0 1px;
  flex: none;
}
.sep {
  width: 1px;
  height: 18px;
  margin: 0 3px;
  background: #a8a8a8;
}
.bar button,
.palette button {
  width: 19px;
  height: 20px;
  flex: none;
  padding: 2px 2px 2px 1px;
}
.bar button svg,
.palette button svg {
  width: 16px;
  height: 16px;
}
.bar .on,
.palette .on {
  background: #f8f8f8;
  box-shadow: inset 1px 1px #a8a8a8, inset -1px -1px #fff;
}
.bar .arr {
  width: 12px;
  padding: 0;
}
.arr::before {
  content: "";
  display: block;
  margin: 0 auto;
  width: 0;
  border: 3px solid transparent;
  border-top: 4px solid currentColor;
  border-bottom: 0;
}
.bar .txt {
  padding: 0;
  font-family: "Liberation Serif", serif;
  font-size: 13px;
  line-height: 16px;
  white-space: nowrap;
}
.bar .b {
  font-weight: bold;
}
.bar .it {
  font-weight: bold;
  font-style: italic;
}
.bar .u {
  text-decoration: underline;
}
.bar .big {
  font-size: 17px;
}
.txt sup,
.txt sub {
  font-size: 8px;
  line-height: 8px;
}
.both {
  display: inline-flex;
  flex-direction: column;
  vertical-align: middle;
}
select {
  appearance: none;
  border: 1px solid #d8d8d8;
  border-radius: 0;
  background: #fff url("data:image/svg+xml,%3Csvg xmlns='http://www.w3.org/2000/svg' width='8' height='6'%3E%3Cpath d='M1 1l3 3 3-3' fill='none' stroke='%23999'/%3E%3C/svg%3E") no-repeat right 3px center;
  color: #8a8a8a;
  font: inherit;
  padding: 0 14px 0 4px;
  height: 18px;
  min-width: 0;
}
.zoom {
  width: 50px;
  height: 19px;
  margin: 0 1px 0 8px;
  padding-left: 2px;
  border-color: #777;
  color: #000;
}
.combo {
  display: flex;
  align-items: center;
  height: 20px;
  margin-right: 1px;
  border: 1px solid #d8d8d8;
  background: #fff;
}
.combo select {
  flex: 1;
  border: 0;
  height: 16px;
}
.combo svg {
  flex: none;
  height: 16px;
}
.font-name {
  width: 82px;
}
.font-name svg {
  width: 16px;
  margin-left: 1px;
}
.size {
  width: 41px;
}
.size select {
  width: 39px;
  padding-left: 2px;
}
.style {
  width: 57px;
}
.style svg {
  width: 28px;
  margin-left: 2px;
}

/* middle */
.main {
  display: flex;
  flex: 1;
  min-height: 0;
}
.palette {
  display: flex;
  flex-direction: column;
  align-items: center;
  align-self: flex-start;
  width: 25px;
  padding-bottom: 7px;
  border-right: 1px solid #a0a0a0;
  border-bottom: 1px solid #a0a0a0;
}
.grip.flat {
  width: 22px;
  height: 5px;
  margin: 3px 0 2px;
  border-width: 1px 0;
}
.palette button {
  height: 19px;
  position: relative;
}
.palette .more::after {
  content: "";
  position: absolute;
  right: 0;
  bottom: 1px;
  border: 2px solid #1010a0;
  border-top-color: transparent;
  border-left-color: transparent;
}
.palette .t {
  font: bold 15px/15px "Liberation Serif", serif;
}
.explorer {
  display: flex;
  flex-direction: column;
  width: 313px;
  padding: 0 8px 0 3px;
  border-left: 1px solid #a0a0a0;
  border-right: 2px solid #808080;
}
.pane-title {
  display: flex;
  align-items: center;
  gap: 2px;
  height: 13px;
  flex: none;
  padding: 0 2px;
}
.rails {
  flex: 1;
  height: 4px;
  border: 1px solid #b0b0b0;
  border-width: 1px 0;
}
.pane-title button,
.dock-title button {
  width: 9px;
  height: 9px;
  font-size: 9px;
  font-weight: bold;
  line-height: 8px;
  box-shadow: inset -1px -1px #777, inset 1px 1px #e0e0e0;
}
.pane-title .faint {
  color: #999;
}
.tree {
  height: 251px;
  flex: none;
  background: #fff;
}
.tree,
.tree ul {
  margin: 0;
  padding: 0;
  list-style: none;
}
.tree svg {
  display: inline-block;
  width: 14px;
  height: 14px;
  margin: 0 3px;
  vertical-align: -3px;
}
.tree li {
  line-height: 15px;
}
.tree ul {
  margin-left: 9px;
}
.tree ul li::before {
  content: "";
  display: inline-block;
  width: 8px;
  height: 8px;
  margin-right: -2px;
  border: 1px dotted #888;
  border-width: 0 0 1px 1px;
  vertical-align: 1px;
}
.sel {
  display: inline-block;
  padding: 0 1px;
  background: #f0f0f0;
}
.files {
  display: block;
  flex: 1;
  margin-top: 1px;
  border-top: 2px solid #666;
  border-spacing: 0;
  background: #fff;
}
.files th {
  height: 20px;
  padding: 0 0 0 9px;
  font-weight: normal;
  text-align: left;
}
.files td {
  height: 16px;
  padding: 0 3px;
  line-height: 16px;
}
.files td svg {
  display: inline-block;
  width: 14px;
  height: 14px;
  margin-right: 1px;
  vertical-align: -3px;
}
.sort {
  display: inline-block;
  margin-right: 13px;
  border: 3px solid transparent;
  border-top: 0;
  border-bottom-color: #999;
  vertical-align: 2px;
}
.hscroll {
  display: flex;
  align-items: center;
  height: 14px;
  flex: none;
}
.hscroll button {
  width: 14px;
  padding: 0 3px;
}
.hscroll svg,
.vscroll svg {
  width: 9px;
  height: 9px;
}
.thumb {
  width: 53px;
  height: 13px;
  margin-right: auto;
  background: #cdcdcd;
}
.workspace {
  display: flex;
  flex: 1;
}
.graph-page {
  flex: 1002;
  position: relative;
  background: #fff;
}
.backdrop {
  flex: 232;
  background: #c0c0c0;
}
.layer {
  position: absolute;
  left: 0;
  top: 0;
  width: 17px;
  height: 17px;
  background: #c0c0c0;
  font-size: 12px;
  font-weight: bold;
}
.chart {
  position: absolute;
  width: 100%;
  height: 100%;
  font-family: "Liberation Sans", Arial, sans-serif;
}
.chart text {
  fill: #000;
  stroke: none;
  font-size: 20px;
}
.legend-box,
.legend-line {
  stroke: #444;
}
.axis,
.ticks {
  stroke: #000;
  stroke-width: 2;
}
.ylabels {
  text-anchor: end;
}
.xlabels {
  text-anchor: middle;
}
.chart .axis-title {
  font-size: 24px;
}
.chart .note {
  font-size: 29px;
  fill: #e01010;
}
.cjk {
  font-family: "Noto Sans CJK SC", sans-serif;
  font-weight: 300;
}
.dock {
  display: flex;
  flex-direction: column;
  width: 28px;
  padding: 0 2px 0 4px;
}
.dock-title {
  display: flex;
  gap: 3px;
  height: 13px;
  align-items: center;
  border-left: 2px solid #808080;
}
.dock-title button:first-child {
  width: 5px;
}
.vscroll {
  display: flex;
  flex-direction: column;
  justify-content: space-between;
  align-items: center;
  flex: 1;
  padding: 4px 0 18px;
  border-left: 2px solid #808080;
  border-right: 1px solid #b0b0b0;
}

/* status bar */
.status {
  display: flex;
  flex: none;
  height: 16px;
  border-top: 1px solid #d0d0d0;
  line-height: 17px;
}
.status span {
  padding-left: 4px;
  border-left: 1px solid #d4d4d4;
}
.status .hint {
  flex: 1;
  padding-left: 2px;
  border: 0;
}
.status .au {
  width: 44px;
  padding: 0;
  border: 0;
}
.status .theme {
  width: 143px;
}
.status .dataset {
  width: 132px;
}
.status .window {
  width: 78px;
}
.status .angle {
  width: 46px;
}

/* watermark over the workspace corner */
.watermark {
  position: absolute;
  right: 64px;
  bottom: 26px;
  width: 316px;
  height: 153px;
  pointer-events: none;
}
.watermark text {
  font-family: "Liberation Sans", sans-serif;
}
.mark {
  fill: #fff;
  stroke: #999;
  stroke-opacity: .35;
  stroke-width: 3;
  fill-opacity: .75;
  paint-order: stroke;
}
.watermark .bai {
  font-size: 65px;
  font-weight: bold;
}
.watermark .jy {
  font: 900 49px "Noto Sans CJK SC", sans-serif;
}
.watermark .url {
  font: 32px "Noto Sans", sans-serif;
  fill-opacity: .9;
}
.watermark .du {
  font-size: 42px;
  font-weight: bold;
  fill: #bbb;
  stroke: #a4a4a4;
}
.activate {
  fill: #a8a8a8;
  stroke: none;
}
.watermark .a1 {
  font: 16px "Open Sans", sans-serif;
}
.watermark .a2 {
  font: 12px "Open Sans", sans-serif;
}
```
